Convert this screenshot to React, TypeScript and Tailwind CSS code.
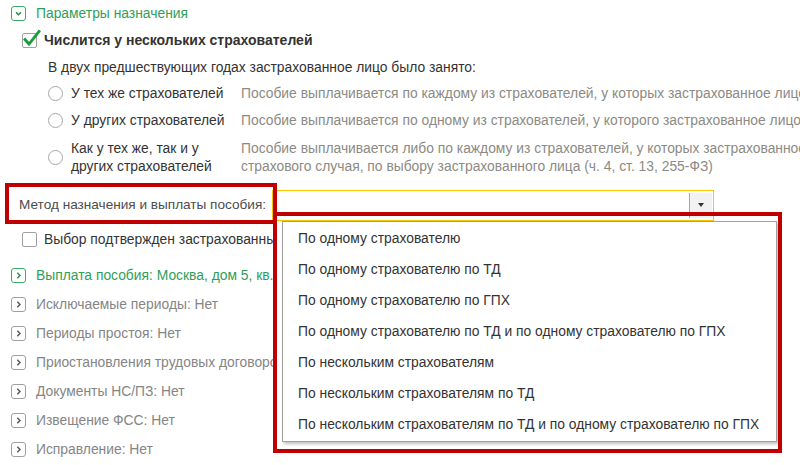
import React from "react";

const GREEN = "text-[#2f9e5a]";

function Expander({ open, green }: { open?: boolean; green?: boolean }) {
  const color = green ? "#3aaa66" : "#a0a0a0";
  return (
    <span
      className="flex h-[15px] w-[15px] shrink-0 items-center justify-center rounded-[3px] border-[1.5px] bg-white"
      style={{ borderColor: color }}
    >
      <svg width="9" height="9" viewBox="0 0 9 9" fill="none">
        {open ? (
          <path d="M2 3.2 4.5 5.8 7 3.2" stroke={green ? "#2a8a50" : "#555"} strokeWidth="1.4" />
        ) : (
          <path d="M3.3 1.8 6 4.5 3.3 7.2" stroke={green ? "#2a8a50" : "#555"} strokeWidth="1.4" />
        )}
      </svg>
    </span>
  );
}

function Radio() {
  return <span className="h-[15px] w-[15px] shrink-0 rounded-full border border-[#a8a8a8] bg-white" />;
}

function Check({ checked }: { checked?: boolean }) {
  return (
    <span className="relative h-[15px] w-[15px] shrink-0 rounded-[2px] border border-[#a0a0a0] bg-white">
      {checked && (
        <svg className="absolute -left-[1px] -top-[5px]" width="20" height="19" viewBox="0 0 20 19" fill="none">
          <path d="M3 10.5 7 15 17 2.5" stroke="#1a9a3a" strokeWidth="2.8" strokeLinecap="square" />
        </svg>
      )}
    </span>
  );
}

const options = [
  "По одному страхователю",
  "По одному страхователю по ТД",
  "По одному страхователю по ГПХ",
  "По одному страхователю по ТД и по одному страхователю по ГПХ",
  "По нескольким страхователям",
  "По нескольким страхователям по ТД",
  "По нескольким страхователям по ТД и по одному страхователю по ГПХ",
];

const groups = [
  { text: "Выплата пособия: Москва, дом 5, кв. 1", green: true },
  { text: "Исключаемые периоды: Нет" },
  { text: "Периоды простоя: Нет" },
  { text: "Приостановления трудовых договоров: Нет" },
  { text: "Документы НС/ПЗ: Нет" },
  { text: "Извещение ФСС: Нет" },
  { text: "Исправление: Нет" },
];

export default function App() {
  return (
    <div className="relative h-[465px] w-[800px] overflow-hidden bg-white font-['Liberation_Sans',Arial,sans-serif] text-[13.85px] text-[#333]">
      <div className="flex flex-col">
        <div className="flex h-[27px] items-center gap-[10px] pl-[11px]">
          <Expander open green />
          <span className={GREEN}>Параметры назначения</span>
        </div>
        <div className="flex h-[27px] items-center gap-[7px] pl-[22px]">
          <Check checked />
          <span className="text-[14px] font-bold text-[#333]">Числится у нескольких страхователей</span>
        </div>
        <div className="flex h-[26px] items-center pl-[48px]">
          В двух предшествующих годах застрахованное лицо было занято:
        </div>
        <div className="flex h-[27px] w-[800px] items-center overflow-hidden whitespace-nowrap pl-[48px]">
          <Radio />
          <span className="ml-[8px] w-[170px] shrink-0">У тех же страхователей</span>
          <span className="text-[#8c8a84]">
            Пособие выплачивается по каждому из страхователей, у которых застрахованное лицо
          </span>
        </div>
        <div className="flex h-[27px] w-[800px] items-center overflow-hidden whitespace-nowrap pl-[48px]">
          <Radio />
          <span className="ml-[8px] w-[170px] shrink-0">У других страхователей</span>
          <span className="text-[#8c8a84]">
            Пособие выплачивается по одному из страхователей, у которого застрахованное лицо
          </span>
        </div>
        <div className="flex h-[46px] w-[800px] items-center overflow-hidden whitespace-nowrap pl-[48px] leading-[18px]">
          <Radio />
          <span className="ml-[8px] w-[170px] shrink-0">
            Как у тех же, так и у
            <br />
            других страхователей
          </span>
          <span className="text-[#8c8a84]">
            Пособие выплачивается либо по каждому из страхователей, у которых застрахованное
            <br />
            страхового случая, по выбору застрахованного лица (ч. 4, ст. 13, 255-ФЗ)
          </span>
        </div>
        <div className="flex h-[50px] items-center">
          <span className="w-[272px] shrink-0 whitespace-nowrap pl-[19px] text-[13.6px] text-[#4d4d4d]">
            Метод назначения и выплаты пособия:
          </span>
          <div className="flex h-[31px] w-[442px] items-center justify-end border border-[#f7c600] bg-white pr-[1px]">
            <div className="flex h-[25px] w-[23px] items-center justify-center border-l border-[#a8a8a8] bg-[#f2f2f2]">
              <span className="h-0 w-0 border-x-[3px] border-t-[4px] border-x-transparent border-t-[#333]" />
            </div>
          </div>
        </div>
        <div className="mb-[13px] flex h-[18px] w-[274px] items-center gap-[7px] overflow-hidden whitespace-nowrap pl-[22px]">
          <Check />
          <span>Выбор подтвержден застрахованны</span>
        </div>
        {groups.map((g) => (
          <div
            key={g.text}
            className="flex h-[29px] w-[276px] items-center gap-[10px] overflow-hidden whitespace-nowrap pl-[11px]"
          >
            <Expander green={g.green} />
            <span className={g.green ? GREEN : "text-[#858585]"}>{g.text}</span>
          </div>
        ))}
      </div>

      {/* dropdown list */}
      <div className="absolute left-[282px] top-[221px] w-[495px] border border-[#a0a0a0] bg-white py-[1px] shadow-[2px_2px_3px_rgba(0,0,0,0.25)]">
        {options.map((o) => (
          <div key={o} className="flex h-[31px] items-center whitespace-nowrap pl-[15px] text-[#333]">
            {o}
          </div>
        ))}
      </div>

      {/* annotation frames */}
      <div className="pointer-events-none absolute left-[5px] top-[183px] h-[41px] w-[272px] border-4 border-[#c00000]" />
      <div className="pointer-events-none absolute left-[273px] top-[212px] h-[241px] w-[509px] border-4 border-[#c00000]" />
    </div>
  );
}
